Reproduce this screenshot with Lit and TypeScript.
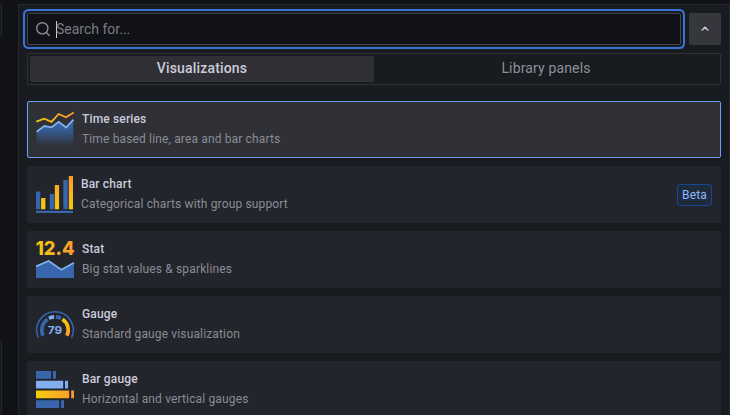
import { LitElement, html, css, svg } from "lit";
import { customElement, state } from "lit/decorators.js";
import { classMap } from "lit/directives/class-map.js";

const timeSeriesIcon = svg`
  <defs>
    <linearGradient id="ts-line" x1="0" x2="1"><stop offset="0" stop-color="#f2cc0c"/><stop offset="1" stop-color="#ff9830"/></linearGradient>
    <linearGradient id="ts-area" x1="0" x2="0" y1="0" y2="1"><stop offset="0" stop-color="#3865ab"/><stop offset="0.4" stop-color="#3865ab" stop-opacity="0.8"/><stop offset="1" stop-color="#3865ab" stop-opacity="0"/></linearGradient>
  </defs>
  <path fill="url(#ts-area)" d="M.8 20.7 8.3 15l7.4 1.3 7-5.4 7.3 5.6 7.2-7.8V35H.8z"/>
  <path fill="none" stroke="#84aff1" stroke-width="1.8" d="M.6 20.9 8.3 15l7.4 1.3 7-5.4 7.3 5.6 7.5-7.9"/>
  <path fill="none" stroke="url(#ts-line)" stroke-width="1.8" d="M.3 10.6 8.3 7.7l7.2 3.1L22.7 3 30 6.3l7.7-4.7"/>`;

const barChartIcon = svg`
  <defs><linearGradient id="bc" x1="0" x2="0" y1="0" y2="33" gradientUnits="userSpaceOnUse"><stop offset="0" stop-color="#ff9830"/><stop offset="1" stop-color="#f2cc0c"/></linearGradient></defs>
  <path fill="#3865ab" d="M0 15.6h4.3V33.2H0zM13.7 18h4.4v15.2h-4.4zM27.3 4h4.4v29.2h-4.4zM0 34.8h37v2.2H0z"/>
  <path fill="url(#bc)" d="M5.1 22h4.3v11.2H5.1zM18.8 9h4.3v24.2h-4.3zM32.8 0H37v33.2h-4.2z"/>`;

const statIcon = svg`
  <defs><linearGradient id="st" x1="0" x2="38" gradientUnits="userSpaceOnUse"><stop offset="0" stop-color="#f2cc0c"/><stop offset="1" stop-color="#ff9830"/></linearGradient></defs>
  <text class="stat-value" x="-0.3" y="14" textLength="38.8" lengthAdjust="spacingAndGlyphs" fill="url(#st)">12.4</text>
  <path fill="#3865ab" d="M0 25.4 12.7 20l12.6 8.8 12.7-7V37H0z"/>
  <path fill="none" stroke="#84aff1" stroke-width="1.7" d="M0 25.4 12.7 20l12.6 8.8 12.7-7"/>`;

const gaugeIcon = svg`
  <defs><linearGradient id="ga" x1="0" x2="0" y1="0" y2="1"><stop offset="0" stop-color="#f2cc0c"/><stop offset="1" stop-color="#ff9830"/></linearGradient></defs>
  <path fill="none" stroke="#3865ab" stroke-width="1.5" d="M2.4 31.8A18.3 18.3 0 1 1 35.6 31.8"/>
  <path fill="none" stroke="#3865ab" stroke-width="3.7" d="M7.1 29.7A13.1 13.1 0 0 1 11.5 13.2"/>
  <path fill="none" stroke="#84aff1" stroke-width="3.7" d="M13 12.3A13.1 13.1 0 0 1 18.1 10.9"/>
  <path fill="none" stroke="#3865ab" stroke-width="3.7" d="M19.9 10.9A13.1 13.1 0 0 1 25 12.3"/>
  <path fill="none" stroke="url(#ga)" stroke-width="3.7" d="M26.5 13.2A13.1 13.1 0 0 1 30.9 29.7"/>
  <text class="gauge-value" x="19" y="27.6" text-anchor="middle" textLength="14.4" lengthAdjust="spacingAndGlyphs">79</text>`;

const barGaugeIcon = svg`
  <defs><linearGradient id="bg" x1="0" x2="38" gradientUnits="userSpaceOnUse"><stop offset="0" stop-color="#f2cc0c"/><stop offset="1" stop-color="#ff9830"/></linearGradient></defs>
  <path fill="#3865ab" d="M0 0h15.2v7.7H0zM17 0h3v7.7h-3zM0 29.3h23.2V37H0zM25 29.3h3V37h-3z"/>
  <path fill="#84aff1" d="M0 9.8h27.2v7.7H0zM29 9.8h3v7.7h-3z"/>
  <path fill="url(#bg)" d="M0 19.5h33.2v7.7H0zM35.2 19.5H38v7.7h-2.8z"/>`;

const items = [
  { name: "Time series", text: "Time based line, area and bar charts", icon: timeSeriesIcon },
  { name: "Bar chart", text: "Categorical charts with group support", icon: barChartIcon, beta: true },
  { name: "Stat", text: "Big stat values & sparklines", icon: statIcon },
  { name: "Gauge", text: "Standard gauge visualization", icon: gaugeIcon },
  { name: "Bar gauge", text: "Horizontal and vertical gauges", icon: barGaugeIcon },
];

@customElement("app-root")
export class AppRoot extends LitElement {
  @state() private selected = 0;

  static styles = css`
    :host {
      display: flex;
      height: 415px;
      overflow: hidden;
      box-sizing: border-box;
      background: #111217;
      color: #ccccdc;
      font-family: Roboto, "Liberation Sans", sans-serif;
      font-size: 14px;
    }
    * { box-sizing: border-box; }
    .left {
      width: 18px;
      flex: none;
      display: flex;
      flex-direction: column;
      justify-content: space-between;
      padding-top: 4px;
    }
    .stub {
      width: 2px;
      background: #181b1f;
      border: 1px solid #25272c;
      border-left: 0;
      border-radius: 0 2px 2px 0;
    }
    .stub.upper { height: 32px; }
    .stub.lower { height: 74px; border-bottom: 0; border-bottom-right-radius: 0; }
    .pane {
      flex: 1;
      margin-top: 4px;
      height: 411px;
      background: #181b1f;
      border: 1px solid #25272c;
      border-bottom: 0;
      padding: 8px 8px 0;
      overflow: hidden;
    }
    .search-row { display: flex; gap: 8px; height: 32px; }
    .search {
      flex: 1;
      display: flex;
      align-items: center;
      background: #111217;
      border: 1px solid #43444b;
      border-radius: 2px;
      box-shadow: 0 0 0 2px #181b1f, 0 0 0 4px #3d71d9;
      padding-left: 7px;
      color: #7b7c85;
    }
    .search svg { width: 16px; height: 16px; margin-right: 5px; }
    .caret { width: 1px; height: 17px; background: #ccccdc; margin-right: -1px; }
    .toggle {
      width: 32px;
      height: 32px;
      padding: 0;
      border: 0;
      border-radius: 2px;
      background: #35373c;
      display: grid;
      place-items: center;
    }
    .tabs {
      display: flex;
      height: 32px;
      margin: 8px 0 16px;
      padding: 2px;
      border: 1px solid #303237;
      border-radius: 2px;
    }
    .tab {
      flex: 1;
      display: grid;
      place-items: center;
      padding-bottom: 2px;
      border-radius: 2px;
      color: #8e8f99;
      letter-spacing: 0.15px;
    }
    .tab.active { background: #2e3035; color: #ccccdc; font-weight: 500; letter-spacing: 0.17px; }
    .list { display: flex; flex-direction: column; gap: 8px; }
    .item {
      height: 57px;
      flex: none;
      display: flex;
      align-items: center;
      padding: 0 8px;
      background: #22252b;
      border: 1px solid #22252b;
      border-radius: 2px;
    }
    .item.current { background: #2f3136; border-color: #6e9fff; }
    .icon { width: 38px; height: 37px; flex: none; overflow: visible; }
    .copy { flex: 1; padding: 0 0 2px 8px; font-size: 12px; }
    .item.beta .copy { padding-left: 7px; }
    .name { font-weight: 500; line-height: 20px; letter-spacing: 0.15px; }
    .desc { color: #8b8c95; line-height: 20px; letter-spacing: 0.145px; }
    .badge {
      height: 22px;
      padding: 0 4px;
      display: flex;
      align-items: center;
      font-size: 12px;
      color: #8ab8ff;
      background: #202a3d;
      border: 1px solid #164694;
      border-radius: 3px;
      letter-spacing: 0.15px;
    }
    .stat-value { font: 800 19px Inter, sans-serif; }
    .gauge-value { font: 700 11px Inter, sans-serif; fill: #84aff1; }
  `;

  render() {
    return html`
      <div class="left"><div class="stub upper"></div><div class="stub lower"></div></div>
      <main class="pane">
        <div class="search-row">
          <div class="search">
            <svg viewBox="0 0 16 16" fill="none" stroke="#8b8c95" stroke-width="1.35" stroke-linecap="round">
              <circle cx="7.3" cy="7.3" r="5.6"/><path d="m11.4 11.4 3 3"/>
            </svg>
            <span class="caret"></span><span>Search for...</span>
          </div>
          <button class="toggle" aria-label="Close">
            <svg width="16" height="16" viewBox="0 0 16 16" fill="none" stroke="#ccccdc" stroke-width="1.5" stroke-linecap="round" stroke-linejoin="round"><path d="m5.2 9 2.8-2.7L10.8 9"/></svg>
          </button>
        </div>
        <div class="tabs">
          <div class="tab active">Visualizations</div>
          <div class="tab">Library panels</div>
        </div>
        <div class="list">
          ${items.map((item, i) => html`
            <div class=${classMap({ item: true, current: i === this.selected, beta: !!item.beta })} @click=${() => (this.selected = i)}>
              <svg class="icon" viewBox="0 0 38 37">${item.icon}</svg>
              <div class="copy">
                <div class="name">${item.name}</div>
                <div class="desc">${item.text}</div>
              </div>
              ${item.beta ? html`<span class="badge">Beta</span>` : ""}
            </div>`)}
        </div>
      </main>`;
  }
}
